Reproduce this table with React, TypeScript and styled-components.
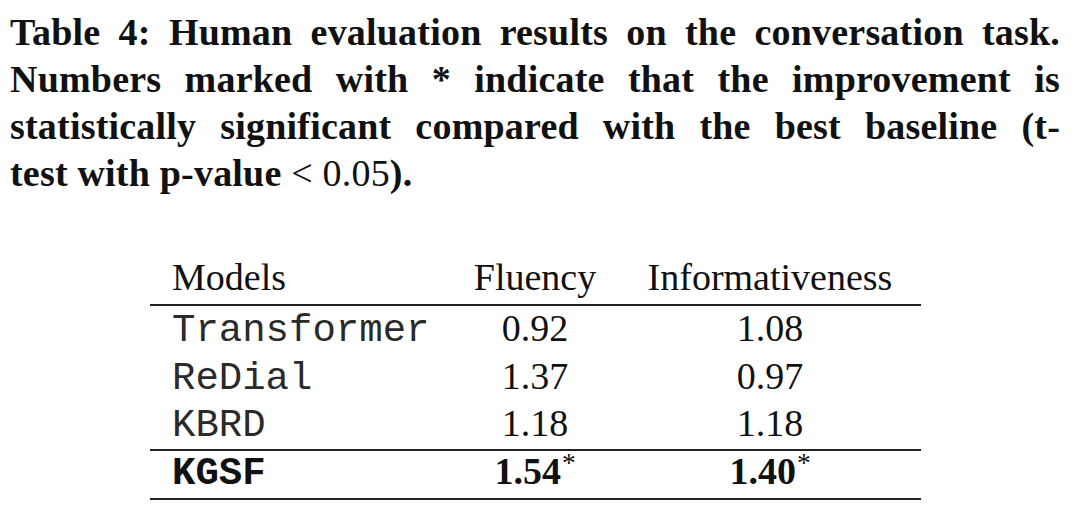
import styled, { createGlobalStyle } from 'styled-components'

const GlobalStyle = createGlobalStyle`
    body {
        margin: 0;
        background: #fff;
        color: #111;
        font-family: 'Liberation Serif', 'DejaVu Serif', serif;
    }
`

interface Row {
    model: string
    fluency: string
    info: string
    best?: boolean
}

const rows: Row[] = [
    { model: 'Transformer', fluency: '0.92', info: '1.08' },
    { model: 'ReDial', fluency: '1.37', info: '0.97' },
    { model: 'KBRD', fluency: '1.18', info: '1.18' },
    { model: 'KGSF', fluency: '1.54', info: '1.40', best: true },
]

const App: React.FC = () => {
    return (
        <Page>
            <GlobalStyle />
            <Caption>
                <CaptionLine $justify>
                    Table 4: Human evaluation results on the conversation task.
                </CaptionLine>
                <CaptionLine $justify>
                    Numbers marked with * indicate that the improvement is
                </CaptionLine>
                <CaptionLine $justify>
                    statistically significant compared with the best baseline (t-
                </CaptionLine>
                <CaptionLine>
                    test with p-value <Plain>&lt; 0.05</Plain>).
                </CaptionLine>
            </Caption>
            <TableWrap>
                <Table>
                    <colgroup>
                        <col style={{ width: 301 }} />
                        <col style={{ width: 168 }} />
                        <col />
                    </colgroup>
                    <thead>
                        <tr>
                            <HeadCell $left>Models</HeadCell>
                            <HeadCell>Fluency</HeadCell>
                            <HeadCell>Informativeness</HeadCell>
                        </tr>
                    </thead>
                    <tbody>
                        {rows.map((row) => (
                            <BodyRow key={row.model} $best={row.best}>
                                <ModelCell $best={row.best}>{row.model}</ModelCell>
                                <NumCell $best={row.best}>
                                    {row.fluency}
                                    {row.best && <Star>*</Star>}
                                </NumCell>
                                <NumCell $best={row.best}>
                                    {row.info}
                                    {row.best && <Star>*</Star>}
                                </NumCell>
                            </BodyRow>
                        ))}
                    </tbody>
                </Table>
            </TableWrap>
        </Page>
    )
}

export default App

const Page = styled.div`
    width: 1080px;
    height: 519px;
    overflow: hidden;
`

const Caption = styled.div`
    padding: 9px 20px 0 10px;
    font-size: 38px;
    font-weight: 700;
    line-height: 47px;
`

const CaptionLine = styled.div<{ $justify?: boolean }>`
    white-space: nowrap;
    text-align: ${(p) => (p.$justify ? 'justify' : 'left')};
    text-align-last: ${(p) => (p.$justify ? 'justify' : 'left')};
    letter-spacing: 0.2px;
`

const Plain = styled.span`
    font-weight: 400;
`

const TableWrap = styled.div`
    padding: 57px 0 0 150px;
`

const Table = styled.table`
    border-collapse: collapse;
    width: 771px;
    table-layout: fixed;
    font-size: 38px;
    line-height: 47px;
`

const HeadCell = styled.th<{ $left?: boolean }>`
    font-weight: 400;
    text-align: ${(p) => (p.$left ? 'left' : 'center')};
    padding: ${(p) => (p.$left ? '0 0 3px 22px' : '0 0 3px 0')};
    border-bottom: 2px solid #222;
    white-space: nowrap;
    vertical-align: baseline;
`

const BodyRow = styled.tr<{ $best?: boolean }>`
    border-top: ${(p) => (p.$best ? '2px solid #222' : 'none')};
    border-bottom: ${(p) => (p.$best ? '2px solid #222' : 'none')};
    line-height: ${(p) => (p.$best ? '41px' : '44.5px')};
`

const ModelCell = styled.td<{ $best?: boolean }>`
    font-family: 'Liberation Mono', 'DejaVu Sans Mono', monospace;
    font-size: 39px;
    font-weight: ${(p) => (p.$best ? 700 : 400)};
    color: ${(p) => (p.$best ? '#111' : '#2a2a2a')};
    padding: ${(p) => (p.$best ? '0 0 3px 22px' : '0 0 0 22px')};
    vertical-align: baseline;
    white-space: nowrap;
`

const NumCell = styled.td<{ $best?: boolean }>`
    text-align: center;
    font-weight: ${(p) => (p.$best ? 700 : 400)};
    padding: ${(p) => (p.$best ? '0 0 3px 0' : '0')};
    vertical-align: baseline;
`

const Star = styled.span`
    font-size: 0.72em;
    font-weight: 400;
    position: relative;
    top: -0.42em;
    line-height: 0;
    margin-left: 1px;
`
